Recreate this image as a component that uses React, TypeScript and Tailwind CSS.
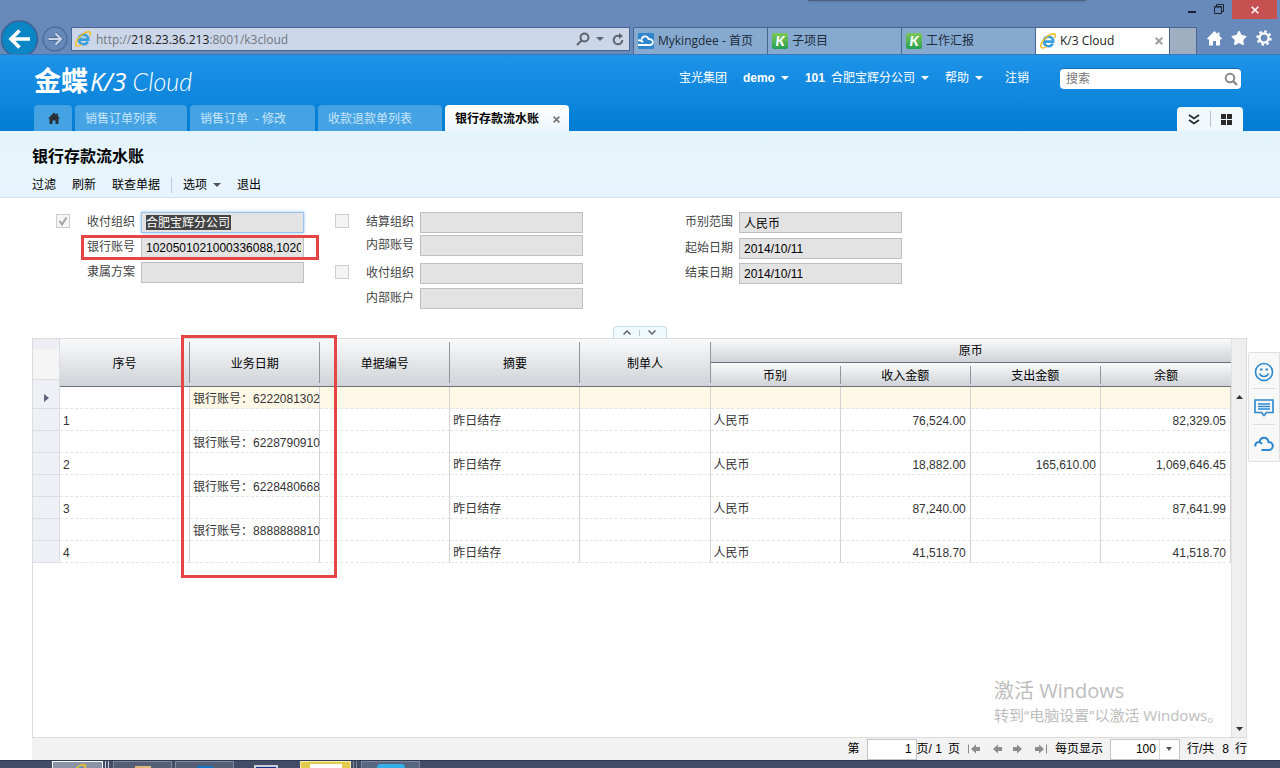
import React from "react";
import { FaStar } from "react-icons/fa";

const COLUMNS = ["序号", "业务日期", "单据编号", "摘要", "制单人"];
const SUB_COLUMNS = ["币别", "收入金额", "支出金额", "余额"];

type Row = {
  no?: string;
  account?: string;
  summary?: string;
  currency?: string;
  income?: string;
  expense?: string;
  balance?: string;
};

const ROWS: Row[] = [
  { account: "6222081302" },
  { no: "1", summary: "昨日结存", currency: "人民币", income: "76,524.00", balance: "82,329.05" },
  { account: "6228790910" },
  {
    no: "2",
    summary: "昨日结存",
    currency: "人民币",
    income: "18,882.00",
    expense: "165,610.00",
    balance: "1,069,646.45",
  },
  { account: "6228480668" },
  { no: "3", summary: "昨日结存", currency: "人民币", income: "87,240.00", balance: "87,641.99" },
  { account: "8888888810" },
  { no: "4", summary: "昨日结存", currency: "人民币", income: "41,518.70", balance: "41,518.70" },
];

const UI_FONT = "font-['Liberation_Sans','Noto_Sans_CJK_SC',sans-serif]";
const CHROME_FONT = "font-['Open_Sans','Noto_Sans_CJK_SC',sans-serif]";

/* ---------- Icons ---------- */

const IeIcon: React.FC = () => (
  <svg width="16" height="16" viewBox="0 0 16 16" fill="none" className="shrink-0">
    <path d="M12.800 10.600A4.800 4.800 0 1 1 13.300 8.600H5" stroke="#3a9fdc" strokeWidth="2.600" />
    <path
      d="M2.200 15C-.6 14 1.200 9.200 5 5.500 9 1.700 13.600 -.4 15 1.400c.6.800.2 2.200-.5 3.400"
      stroke="#f2c029"
      strokeWidth="1.600"
    />
    <path d="M2.200 15c1.200.3 2.700-.3 4.300-1.300" stroke="#f2c029" strokeWidth="1.400" />
  </svg>
);

const KIcon: React.FC = () => (
  <span className="flex h-4 w-4 shrink-0 items-center justify-center rounded-xs bg-linear-to-b from-[#7cc756] to-[#1f9f4d] font-['Lato',sans-serif] text-sm leading-none font-black text-white italic">
    K
  </span>
);

const CloudTabIcon: React.FC = () => (
  <svg width="16" height="16" viewBox="0 0 16 16" fill="none" className="shrink-0">
    <rect width="16" height="16" rx="1" fill="#2f86cf" />
    <path
      d="M0 7.500c2.200-.8 3.800.2 5 1.700M3.700 6.500C4 2.600 9.500 2 10.600 6.200c3.200-.5 5 2 4 4.300-.5 1-1.300 1.500-2.600 1.500H0"
      stroke="#fff"
      strokeWidth="1.800"
    />
  </svg>
);

const Caret: React.FC<{ className?: string }> = ({ className = "" }) => (
  <svg width="8" height="4" viewBox="0 0 8 4" fill="currentColor" className={className}>
    <path d="M0 0h8L4 4z" />
  </svg>
);

const CloseIcon: React.FC<{ size?: number; width?: number }> = ({ size = 8, width = 2 }) => (
  <svg width={size} height={size} viewBox="0 0 8 8" stroke="currentColor" strokeWidth={width}>
    <path d="M.7.7l6.600 6.600M7.300.7L.7 7.300" />
  </svg>
);

const SearchIcon: React.FC<{ flip?: boolean }> = ({ flip }) => (
  <svg width="14" height="14" viewBox="0 0 14 14" fill="none" stroke="currentColor" strokeWidth="2">
    {flip ? (
      <>
        <circle cx="8.500" cy="5.500" r="4" />
        <path d="M5.500 8.500L1 13" />
      </>
    ) : (
      <>
        <circle cx="6" cy="6" r="4.300" />
        <path d="M9 9l4 4" strokeWidth="2.400" />
      </>
    )}
  </svg>
);

/* ---------- Browser window ---------- */

const BrowserTab: React.FC<{ icon: React.ReactNode; title: string; active?: boolean }> = ({
  icon,
  title,
  active,
}) => (
  <button
    className={`flex h-full w-[134px] items-center gap-1 overflow-hidden border-t border-l border-[#4a648f] pl-1 text-left text-xs whitespace-nowrap ${
      active ? "bg-white text-[#222]" : "bg-[#86aacf] text-[#1d2a3c]"
    }`}
  >
    {icon}
    <span className="flex-1">{title}</span>
    {active && (
      <span className="pr-1.5 text-[#a0a0a0]">
        <CloseIcon />
      </span>
    )}
  </button>
);

const BrowserBar: React.FC = () => (
  <header className={`relative shrink-0 overflow-hidden border-b border-[#3f76b5] bg-[#678abb] ${CHROME_FONT}`}>
    <div className="absolute top-0 right-[194px] h-px w-[278px] bg-[#4c617f] shadow-[0_0_3px_#3a5070]" />
    <div className="flex h-[27px] items-start justify-end pr-[3px] text-[#1a2230]">
      <button aria-label="最小化" className="flex h-[18px] w-[26px] items-center justify-center">
        <span className="mt-1.5 h-0.5 w-2 bg-[#1a2230]" />
      </button>
      <button aria-label="还原" className="flex h-[18px] w-[27px] items-center justify-center">
        <svg width="10" height="10" viewBox="0 0 10 10" fill="none" stroke="currentColor">
          <path d="M.5 3h7v6.500h-7zM.5 2.500h7M2.500 2V.5h7v7H8" />
        </svg>
      </button>
      <button
        aria-label="关闭"
        className="flex h-[19px] w-[45px] items-center justify-center bg-[#c75050] text-white"
      >
        <CloseIcon width={1.6} />
      </button>
    </div>

    <div className="flex h-[27px] items-end">
      <button aria-label="后退" className="ml-px shrink-0">
        <svg width="38" height="34" viewBox="0 0 38 34">
          <circle cx="18.500" cy="19" r="18" fill="#0a86c4" stroke="#3f5f93" strokeWidth="1.500" />
          <path d="M29 19H11M18.500 10.500L10 19l8.500 8.500" fill="none" stroke="#fff" strokeWidth="3.600" />
        </svg>
      </button>
      <button aria-label="前进" className="ml-[3px] shrink-0">
        <svg width="26" height="28" viewBox="0 0 26 28" fill="none">
          <circle cx="13" cy="13" r="12" stroke="#4f6c9d" strokeWidth="1.500" />
          <path d="M6.500 13h12M13.500 7.500L19 13l-5.500 5.500" stroke="#4f6c9d" strokeWidth="4" />
          <path d="M6.500 13h12M13.500 7.500L19 13l-5.500 5.500" stroke="#c9d6e8" strokeWidth="2.200" />
        </svg>
      </button>
      <div className="mb-[3px] ml-[3px] flex h-6 flex-1 items-center border border-[#4a648f] bg-[#cbd6e8] pl-[3px]">
        <IeIcon />
        <div className="ml-[5px] flex-1 pt-px text-xs text-[#707782]">
          http://<span className="text-[#1a1a1a]">218.23.36.213</span>:8001/k3cloud
        </div>
        <button aria-label="搜索" className="text-[#5d6470]">
          <SearchIcon flip />
        </button>
        <Caret className="mx-1.5 text-[#5d6470]" />
        <button aria-label="刷新页面" className="mr-[5px] ml-0.5 text-[#5d6470]">
          <svg width="12" height="13" viewBox="0 0 12 13" fill="none" stroke="currentColor" strokeWidth="2">
            <path d="M7.500 3A4.300 4.300 0 1 0 10.300 7" />
            <path d="M7 0l4 3-4 3z" fill="currentColor" stroke="none" />
          </svg>
        </button>
      </div>
      <nav className="ml-[3px] flex h-full border-r border-[#4a648f]">
        <BrowserTab icon={<CloudTabIcon />} title="Mykingdee - 首页" />
        <BrowserTab icon={<KIcon />} title="子项目" />
        <BrowserTab icon={<KIcon />} title="工作汇报" />
        <BrowserTab icon={<IeIcon />} title="K/3 Cloud" active />
        <button
          aria-label="新建选项卡"
          className="h-full w-[27px] border-t border-l border-[#4a648f] bg-[#a0aec2]"
        />
      </nav>
      <div className="flex h-6 w-[83px] items-center gap-[9px] pl-2.5 text-white">
        <svg width="15" height="15" viewBox="0 0 15 15" fill="currentColor" className="mb-2">
          <path d="M7.500 0L0 7.500l1.200 1.200.8-.7v6.500h4V10h3v4.500h4V8l.8.700L15 7.500l-2.500-2.500V1.500h-2V3z" />
        </svg>
        <FaStar size={16} className="mb-2" />
        <svg width="16" height="16" viewBox="0 0 16 16" fill="none" stroke="currentColor" className="mb-2">
          <circle cx="8" cy="8" r="4.600" strokeWidth="2.400" />
          <circle cx="8" cy="8" r="6.600" strokeWidth="2.200" strokeDasharray="2.600 2.584" />
        </svg>
      </div>
    </div>
  </header>
);

/* ---------- Application header ---------- */

const PageTab: React.FC<{ title: string; className: string }> = ({ title, className }) => (
  <button
    className={`h-[26px] rounded-t bg-[#45a2e3] pt-0.5 pl-2.5 text-left text-xs text-[#c6e6fb] ${className}`}
  >
    {title}
  </button>
);

const AppHeader: React.FC = () => (
  <div className="flex shrink-0 flex-col bg-linear-to-b from-[#1d94e8] to-[#007cd4]">
    <div className="flex h-[50px] items-center justify-between pr-[39px] pl-[34px] text-white">
      <div className="flex items-baseline pt-1 leading-none">
        <span className="text-[27px] leading-none font-bold">金蝶</span>
        <span className="ml-0.5 font-['Open_Sans',sans-serif] text-[25px] leading-none font-medium italic">K/3</span>
        <span className="ml-1.5 font-['Lato',sans-serif] text-[25px] leading-none font-light italic">Cloud</span>
      </div>
      <div className="flex items-center pb-1 text-xs whitespace-nowrap">
        <a href="#">宝光集团</a>
        <button className="ml-4 flex items-center font-bold">
          demo <Caret className="ml-1.5" />
        </button>
        <button className="ml-4 flex items-center">
          <b className="mr-1.5">101</b>合肥宝辉分公司 <Caret className="ml-1.5" />
        </button>
        <button className="ml-4 flex items-center">
          帮助 <Caret className="ml-1.5" />
        </button>
        <a href="#" className="ml-[22px]">
          注销
        </a>
        <label className="ml-[31px] flex h-[21px] w-[181px] items-center rounded-sm border-t border-[#1468b0] bg-white pr-[3px] pl-1.5 text-[#8a8a8a]">
          <input
            aria-label="搜索"
            placeholder="搜索"
            className="min-w-0 flex-1 text-xs text-gray-700 outline-none placeholder:text-[#777]"
          />
          <SearchIcon />
        </label>
      </div>
    </div>
    <div className="flex h-[26px] items-end gap-[3px] pr-[37px] pl-[34px]">
      <button
        aria-label="主页"
        className="flex h-[26px] w-[38px] items-center justify-center rounded-t bg-[#45a2e3] pl-0.5 text-[#2a3038]"
      >
        <svg width="12" height="12" viewBox="0 0 12 12" fill="currentColor">
          <path d="M6 .5L0 6.500h1.500V12h3V8.500h3V12h3V6.500H12L10 4.500V1.500H8.500V3z" />
        </svg>
      </button>
      <PageTab title="销售订单列表" className="w-[112px]" />
      <PageTab title="销售订单  - 修改" className="w-[125px] whitespace-pre" />
      <PageTab title="收款退款单列表" className="w-[124px]" />
      <div className="flex h-[26px] w-[124px] items-center rounded-t bg-linear-to-b from-white to-[#eaf6fd] pt-0.5 pl-2.5 text-xs font-bold text-black">
        <span>银行存款流水账</span>
        <button aria-label="关闭标签" className="ml-3.5 text-[#777]">
          <CloseIcon size={7} />
        </button>
      </div>
      <div className="ml-auto flex h-6 w-[66px] items-center justify-center gap-2.5 rounded-t bg-[#f2f9fe] text-[#2a2a2a]">
        <button aria-label="展开">
          <svg width="12" height="11" viewBox="0 0 12 11" fill="none" stroke="currentColor" strokeWidth="1.800">
            <path d="M1 1l5 3.500L11 1M1 6l5 3.500L11 6" />
          </svg>
        </button>
        <span className="h-4 w-px bg-[#b8c2c9]" />
        <button aria-label="布局">
          <svg width="11" height="11" viewBox="0 0 11 11" fill="currentColor">
            <path d="M0 0h5v5H0zM6 0h5v5H6zM0 6h5v5H0zM6 6h5v5H6z" />
          </svg>
        </button>
      </div>
    </div>
  </div>
);

const Toolbar: React.FC = () => (
  <div className="shrink-0 border-b border-[#cfe5f5] bg-linear-to-b from-[#e4f4fb] to-[#e8f4fd] px-8 pt-[13px] text-black">
    <h1 className="text-base leading-[26px] font-bold">银行存款流水账</h1>
    <div className="flex h-[27px] items-center gap-4 pt-0.5 text-xs">
      <button>过滤</button>
      <button>刷新</button>
      <button>联查单据</button>
      <span className="-mx-[5px] h-4 w-px bg-[#b9cbe0]" />
      <button className="flex items-center gap-1.5">
        选项 <Caret className="text-[#555]" />
      </button>
      <button>退出</button>
    </div>
  </div>
);

/* ---------- Filter form ---------- */

type FieldProps = {
  id: string;
  label: string;
  value?: string;
  check?: "on" | "off";
  selected?: boolean;
  className?: string;
  children?: React.ReactNode;
};

const Field: React.FC<FieldProps> = ({ id, label, value = "", check, selected, className = "", children }) => (
  <div className={`relative flex h-[21px] items-center justify-end ${className}`}>
    {check && (
      <span className="relative mr-[17px] mb-1 h-3.5 w-3.5">
        <input
          type="checkbox"
          disabled
          aria-label={label}
          checked={check === "on"}
          readOnly
          className="block h-3.5 w-3.5 appearance-none border border-[#cfcfcf] bg-[#f4f4f4]"
        />
        {check === "on" && (
          <svg
            viewBox="0 0 14 14"
            fill="none"
            stroke="#a5a5a5"
            strokeWidth="2"
            className="absolute inset-0 h-3.5 w-3.5"
          >
            <path d="M3.500 7l2.500 3.500L10.500 3.500" />
          </svg>
        )}
      </span>
    )}
    <label htmlFor={id} className="mr-1.5 mb-0.5 w-12 whitespace-nowrap text-[#444]">
      {label}
    </label>
    {selected ? (
      <div className="flex h-[21px] w-[163px] items-center border border-[#9cc3ea] bg-[#e3e3e3] shadow-[0_0_3px_#8fc0f0]">
        <input
          id={id}
          readOnly
          value={value}
          className="ml-1 h-[15px] w-[85px] bg-[#444] text-white outline-none"
        />
      </div>
    ) : (
      <input
        id={id}
        readOnly
        value={value}
        className="h-[21px] w-[163px] border border-[#bfbfbf] bg-[#e3e3e3] pr-0.5 pl-1 text-black outline-none"
      />
    )}
    {children}
  </div>
);

const FilterForm: React.FC = () => (
  <form className="flex shrink-0 items-start pt-3.5 pl-14 text-xs">
    <div className="w-[248px]">
      <Field id="org" label="收付组织" value="合肥宝辉分公司" check="on" selected />
      <Field id="bank" label="银行账号" value="1020501021000336088,1020501021" className="mt-1">
        <span className="absolute -top-0.5 -right-[15px] -bottom-0.5 left-[25px] border-3 border-[#e64545]" />
      </Field>
      <Field id="plan" label="隶属方案" className="mt-1" />
    </div>
    <div className="ml-[31px] w-[248px]">
      <Field id="settle" label="结算组织" check="off" />
      <Field id="inner-no" label="内部账号" className="mt-0.5" />
      <Field id="pay-org" label="收付组织" check="off" className="mt-[7px]" />
      <Field id="inner-acct" label="内部账户" className="mt-1" />
    </div>
    <div className="ml-[102px]">
      <Field id="currency" label="币别范围" value="人民币" />
      <Field id="start" label="起始日期" value="2014/10/11" className="mt-[5px]" />
      <Field id="end" label="结束日期" value="2014/10/11" className="mt-1" />
    </div>
  </form>
);

/* ---------- Ledger grid ---------- */

const HEAD_CELL = "bg-linear-to-b from-[#f9fafb] to-[#cfd3d7] border-b border-[#6b7076] p-0 font-normal";
const BODY_CELL =
  "h-[22px] border-r border-b border-r-[#d2d2d2] border-b-[#e4e4e4] [border-bottom-style:dashed] pt-0.5 pr-1 pb-0 pl-[3px] whitespace-nowrap";

const LedgerTable: React.FC = () => (
  <table className="w-full table-fixed border-separate border-spacing-0 text-xs">
    <colgroup>
      <col className="w-[27px]" />
      {[...COLUMNS, ...SUB_COLUMNS].map((name) => (
        <col key={name} />
      ))}
    </colgroup>
    <thead className="text-black">
      <tr className="h-6">
        <th
          rowSpan={2}
          className="border-r border-[#dcdde2] bg-linear-to-b from-[#eceef3] from-20% to-[#f5f5f5] to-20% p-0 align-bottom"
        >
          <div className="h-2 border-t border-[#dcdde2] bg-[#eff0f5]" />
        </th>
        {COLUMNS.map((name) => (
          <th key={name} rowSpan={2} className={HEAD_CELL}>
            <div className="flex h-[41px] items-center justify-center border-r border-[#8d959d] pt-0.5">{name}</div>
          </th>
        ))}
        <th colSpan={4} className={HEAD_CELL}>
          原币
        </th>
      </tr>
      <tr className="h-6">
        {SUB_COLUMNS.map((name, i) => (
          <th key={name} className={HEAD_CELL}>
            <div
              className={`flex h-[18px] items-center justify-center pt-0.5 ${
                i < SUB_COLUMNS.length - 1 ? "border-r border-[#8d959d]" : ""
              }`}
            >
              {name}
            </div>
          </th>
        ))}
      </tr>
    </thead>
    <tbody className="text-[#333]">
      {ROWS.map((row, i) => {
        const tint = i === 0 ? "bg-[#fff8e6]" : "";
        return (
          <tr key={i}>
            <td className="border-r border-b border-[#dcdde2] bg-[#eff0f5] p-0">
              {i === 0 && (
                <svg width="5" height="8" viewBox="0 0 5 8" fill="#5f5f80" className="mr-[10px] ml-auto">
                  <path d="M0 0l5 4-5 4z" />
                </svg>
              )}
            </td>
            <td className={BODY_CELL}>{row.no}</td>
            <td className={`${BODY_CELL} ${tint}`}>{row.account && `银行账号：${row.account}`}</td>
            <td className={`${BODY_CELL} ${i === 0 ? "bg-[#fff8e6]" : ""}`} />
            <td className={`${BODY_CELL} ${tint}`}>{row.summary}</td>
            <td className={`${BODY_CELL} ${tint}`} />
            <td className={`${BODY_CELL} ${tint}`}>{row.currency}</td>
            <td className={`${BODY_CELL} ${tint} text-right`}>{row.income}</td>
            <td className={`${BODY_CELL} ${tint} text-right`}>{row.expense}</td>
            <td className={`${BODY_CELL} ${tint} text-right`}>{row.balance}</td>
          </tr>
        );
      })}
    </tbody>
  </table>
);

const PagerArrow: React.FC<{ label: string; back?: boolean; end?: boolean }> = ({ label, back, end }) => (
  <button type="button" aria-label={label} className="text-[#8c8c8c]">
    <svg
      width="13"
      height="10"
      viewBox="0 0 13 10"
      fill="currentColor"
      className={back ? "" : "-scale-x-100"}
    >
      <path d="M3 5l5-4.500V3h4v4H8v2.500z" />
      {end && <path d="M0 .5h1v9H0z" />}
    </svg>
  </button>
);

const Pager: React.FC = () => (
  <div className="flex h-[22px] shrink-0 items-center justify-end bg-[#f2f2f2] text-xs whitespace-nowrap text-black">
    <label htmlFor="page">第</label>
    <input
      id="page"
      defaultValue="1"
      className="ml-[7px] h-[21px] w-[50px] border border-[#c4c4c4] bg-white px-1 text-right outline-none"
    />
    <span>页/ 1</span>
    <span className="ml-1.5">页</span>
    <div className="mx-2 flex items-center gap-[9px]">
      <PagerArrow label="首页" back end />
      <PagerArrow label="上一页" back />
      <PagerArrow label="下一页" />
      <PagerArrow label="末页" end />
    </div>
    <label htmlFor="page-size">每页显示</label>
    <div className="relative mx-[7px] h-[21px] w-[70px]">
      <select
        id="page-size"
        defaultValue="100"
        className="h-full w-full appearance-none border border-[#c4c4c4] bg-white pr-[23px] [text-align-last:right] outline-none"
      >
        <option>100</option>
      </select>
      <span className="pointer-events-none absolute inset-y-px right-px flex w-5 items-center justify-center border-l border-[#dcdcdc] text-[#555]">
        <svg width="6" height="4" viewBox="0 0 6 4" fill="currentColor">
          <path d="M0 0h6L3 4z" />
        </svg>
      </span>
    </div>
    <span>行/共</span>
    <span className="ml-2">8</span>
    <span className="ml-1.5">行</span>
  </div>
);

const Ledger: React.FC = () => (
  <section className="flex min-h-0 flex-1 flex-col pr-[33px] pl-8">
    <div className="flex justify-center">
      <div className="flex h-3 w-[54px] items-center justify-center gap-2 rounded-t border border-b-0 border-[#c5dff0] bg-[#f0f9fe] text-[#666]">
        <button aria-label="收起">
          <svg
            width="8"
            height="5"
            viewBox="0 0 8 5"
            fill="none"
            stroke="currentColor"
            strokeWidth="1.500"
            className="block"
          >
            <path d="M.5 4.500L4 1l3.500 3.500" />
          </svg>
        </button>
        <span className="h-1.5 w-px bg-[#b5c8d5]" />
        <button aria-label="下拉">
          <svg
            width="8"
            height="5"
            viewBox="0 0 8 5"
            fill="none"
            stroke="currentColor"
            strokeWidth="1.500"
            className="block"
          >
            <path d="M.5.5L4 4 7.500.5" />
          </svg>
        </button>
      </div>
    </div>
    <div className="relative flex min-h-0 flex-1 border border-[#dcdcdc] bg-white">
      <div className="min-w-0 flex-1">
        <LedgerTable />
      </div>
      <div className="flex w-[15px] flex-col items-center justify-between border-l border-[#e2e2e2] bg-[#efefef] pt-[56px] pb-1.5 text-[#333]">
        <svg width="7" height="4" viewBox="0 0 7 4" fill="currentColor">
          <path d="M0 4h7L3.500 0z" />
        </svg>
        <svg width="7" height="4" viewBox="0 0 7 4" fill="currentColor">
          <path d="M0 0h7L3.500 4z" />
        </svg>
      </div>
      <span className="absolute -top-1 left-[148px] h-[243px] w-[156px] border-3 border-[#e64545]" />
      <div
        className={`absolute right-[18px] bottom-[11px] w-[234px] whitespace-nowrap text-[#bdbdbd] ${CHROME_FONT}`}
      >
        <p className="text-xl leading-[26px]">激活 Windows</p>
        <p className="text-[15px] leading-[22px]">转到“电脑设置”以激活 Windows。</p>
      </div>
    </div>
    <Pager />
  </section>
);

const SidePanel: React.FC = () => (
  <aside className="absolute top-[352px] right-0 flex w-8 flex-col items-center rounded-l-xs border border-[#e0e0e0] bg-[#f8f8f8] text-[#2b87cf]">
    <button aria-label="表情" className="flex h-9 w-[22px] items-center justify-center border-b border-[#dedede] pt-0.5">
      <svg width="20" height="20" viewBox="0 0 20 20" fill="none" stroke="currentColor" strokeWidth="1.600">
        <circle cx="10" cy="10" r="8.500" />
        <path d="M5.500 11.500c1.500 4 7.500 4 9 0" />
        <path d="M6 7.500h2.500M11.500 7.500H14" strokeWidth="2.200" />
      </svg>
    </button>
    <button aria-label="消息" className="flex h-9 w-[22px] items-center justify-center border-b border-[#dedede] pt-0.5">
      <svg width="20" height="18" viewBox="0 0 20 18" fill="none" stroke="currentColor" strokeWidth="1.600">
        <path d="M1 1h18v12.500h-6.500L10 16.500l-2.500-3H1z" />
        <path d="M4 5h12M4 7.500h12M4 10h12" strokeWidth="1.400" />
      </svg>
    </button>
    <button aria-label="云" className="flex h-9 w-[22px] items-center justify-center pt-0.5">
      <svg width="20" height="16" viewBox="0 0 20 16" fill="none" stroke="currentColor" strokeWidth="2">
        <path d="M1.500 10.500C.5 6 5.500 4.500 8 8M5.500 5.500c1.500-5 8-5 9 .5 3.500 0 5 3 4 5.500-.7 1.700-2 2.500-4 2.500H7.500" />
      </svg>
    </button>
  </aside>
);

/* ---------- Desktop taskbar ---------- */

const Taskbar: React.FC = () => (
  <footer className="flex h-2 shrink-0 items-start overflow-hidden border-t border-[#2e3a52] bg-[#434c66] pl-[52px]">
    <button aria-label="IE" className="flex h-8 w-[51px] justify-center border border-white bg-[#8b93a6] pt-0.5">
      <IeIcon />
    </button>
    <span className="ml-0.5 h-2 w-1 border-x border-[#c9ced9]" />
    <button aria-label="文件夹" className="ml-1 flex h-8 w-[59px] justify-center border border-[#7f879b] bg-[#555e77] pt-1">
      <span className="h-4 w-4 bg-[#e0b979]" />
    </button>
    <button aria-label="文档" className="ml-[3px] flex h-8 w-[59px] justify-center border border-[#7f879b] bg-[#555e77] pt-1">
      <span className="h-4 w-4 bg-[#1572c4]" />
    </button>
    <span className="mt-1 ml-5 h-4 w-6 border-2 border-[#c9ced9] bg-[#10308a]" />
    <button aria-label="便笺" className="ml-[22px] flex h-8 w-[51px] justify-center border border-[#f5eeb0] bg-[#e3cc4c] pt-0.5">
      <span className="h-4 w-8 bg-white" />
    </button>
    <span className="ml-0.5 h-2 w-1 border-x border-[#7f879b]" />
    <button aria-label="消息程序" className="ml-1 flex h-8 w-[59px] justify-center border border-[#7f879b] bg-[#56677f] pt-0.5">
      <span className="h-4 w-7 rounded bg-[#35aeea]" />
    </button>
  </footer>
);

const App: React.FC = () => (
  <div className={`relative flex h-screen flex-col overflow-hidden bg-white ${UI_FONT}`}>
    <BrowserBar />
    <AppHeader />
    <Toolbar />
    <FilterForm />
    <div className="h-[17px] shrink-0" />
    <Ledger />
    <SidePanel />
    <Taskbar />
  </div>
);

export default App;
